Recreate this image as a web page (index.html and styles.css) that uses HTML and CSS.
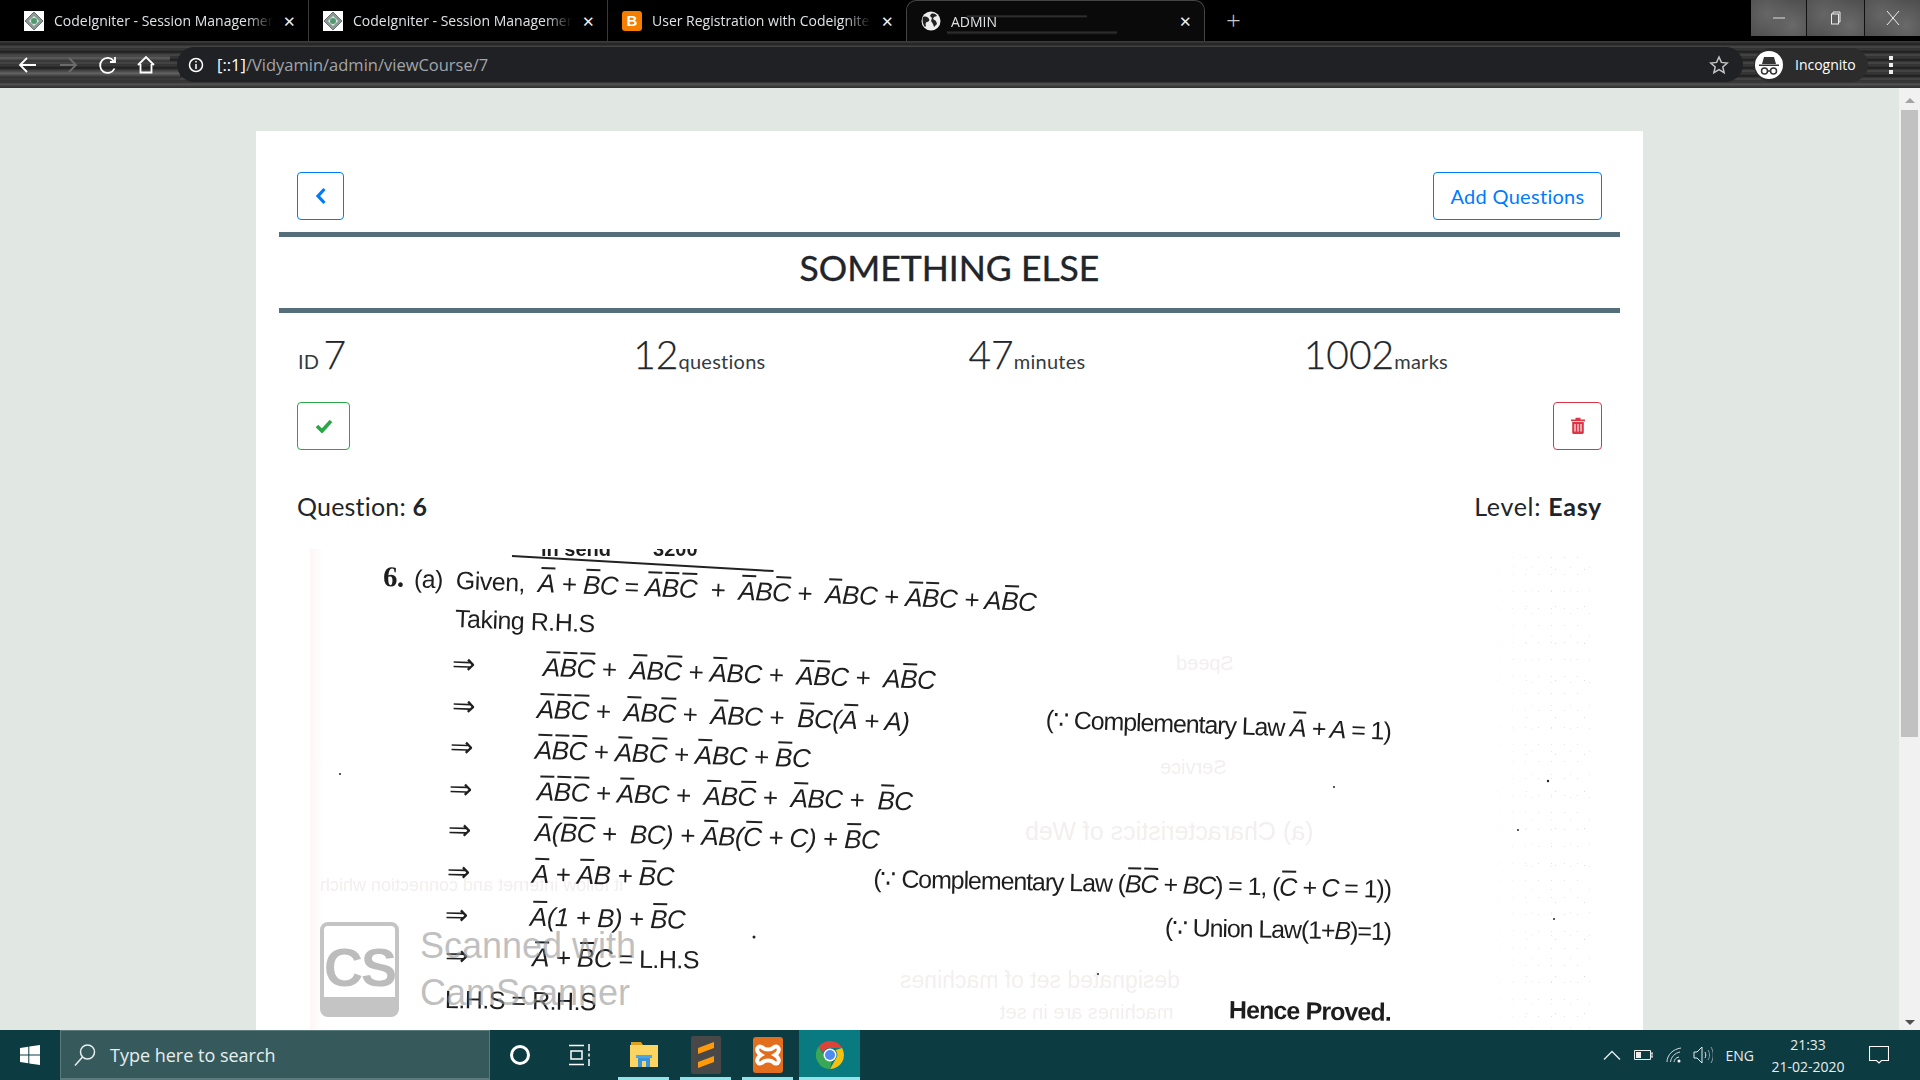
FILE: index.html
```html
<!DOCTYPE html>
<html lang="en">
<head>
  <meta charset="UTF-8" />
  <title>ADMIN</title>
  <link rel="stylesheet" href="styles.css">
</head>
<body>
<div class="screen">

  <div class="tabstrip">
    <div class="tab">
      <svg class="favicon" viewBox="0 0 20 20"><rect width="20" height="20" fill="#fff"/><path d="M10 1l9 9-9 9-9-9z" fill="#8a9a94" stroke="#555" stroke-width=".8"/><path d="M10 5l5 5-5 5-5-5z" fill="#dfe8e2"/><circle cx="10" cy="10" r="3" fill="#4f9a6e"/></svg>
      <span class="tab-title">CodeIgniter - Session Management</span>
      <span class="tab-close">✕</span>
    </div>
    <div class="tab">
      <svg class="favicon" viewBox="0 0 20 20"><rect width="20" height="20" fill="#fff"/><path d="M10 1l9 9-9 9-9-9z" fill="#8a9a94" stroke="#555" stroke-width=".8"/><path d="M10 5l5 5-5 5-5-5z" fill="#dfe8e2"/><circle cx="10" cy="10" r="3" fill="#4f9a6e"/></svg>
      <span class="tab-title">CodeIgniter - Session Management</span>
      <span class="tab-close">✕</span>
    </div>
    <div class="tab tab-last">
      <span class="favicon blogger">B</span>
      <span class="tab-title">User Registration with Codeigniter</span>
      <span class="tab-close">✕</span>
    </div>
    <div class="tab tab-active">
      <svg class="favicon" viewBox="0 0 20 20"><circle cx="10" cy="10" r="9.5" fill="#eee"/><path d="M2 6c3-1 5 0 6 2s-1 3-2 3-2 2-1 4l-1 1C2 14 1 9 2 6zM10 3c3-1 5 0 6 2l-3 1-1 2 3 2 1 3-3 3-1-3-2-3 1-3-2-2z" fill="#222"/></svg>
      <span class="tab-title">ADMIN</span>
      <span class="tab-close">✕</span>
    </div>
    <span class="new-tab">+</span>
    <div class="win-buttons">
      <span class="win-btn"><svg width="12" height="12" viewBox="0 0 12 12"><path d="M0 6h12" stroke="#ddd"/></svg></span>
      <span class="win-btn"><svg width="14" height="14" viewBox="0 0 14 14" fill="none" stroke="#eee"><path d="M4 3V1h7v10H9"/><rect x="2.500" y="3" width="7" height="10"/></svg></span>
      <span class="win-btn win-btn-close"><svg width="14" height="14" viewBox="0 0 14 14"><path d="M1 0l12 14M13 0L1 14" stroke="#eee"/></svg></span>
    </div>
  </div>

  <div class="toolbar">
    <svg class="tool" viewBox="0 0 20 20" fill="none" stroke="#fff" stroke-width="1.800"><path d="M18 10H3M9 3l-7 7 7 7"/></svg>
    <svg class="tool" viewBox="0 0 20 20" fill="none" stroke="#6b6b6b" stroke-width="1.800"><path d="M2 10h15M11 3l7 7-7 7"/></svg>
    <svg class="tool" viewBox="0 0 20 20" fill="none" stroke="#fff" stroke-width="1.800"><path d="M16.500 13.500a7.500 7.500 0 1 1-.8-7.500"/><path d="M17 2v5h-5"/></svg>
    <svg class="tool" viewBox="0 0 20 20" fill="none" stroke="#fff" stroke-width="1.800"><path d="M2 10l8-8 8 8M4.500 9v8.500h11V9"/></svg>
    <div class="omnibox">
      <svg class="info-icon" viewBox="0 0 16 16" fill="none" stroke="#fff" stroke-width="1.500"><circle cx="8" cy="8" r="6.500"/><path d="M8 7v5M8 4v1.500"/></svg>
      <span class="url"><span class="url-host">[::1]</span>/Vidyamin/admin/viewCourse/7</span>
      <svg class="star-icon" viewBox="0 0 20 20" fill="none" stroke="#c4c4c4" stroke-width="1.500"><path d="M10 2l2.400 5.400 5.800.6-4.400 3.900 1.300 5.700-5.100-3-5.100 3 1.300-5.700L1.800 8l5.800-.6z"/></svg>
    </div>
    <div class="profile">
      <svg class="profile-icon" viewBox="0 0 28 28"><circle cx="14" cy="14" r="14" fill="#fff"/><path d="M9 6h10l2 7H7zM4 13.500h20V15H4z" fill="#333"/><g fill="none" stroke="#333" stroke-width="1.500"><circle cx="9.500" cy="20" r="3"/><circle cx="18.500" cy="20" r="3"/><path d="M12.500 20h3"/></g></svg>
      <span>Incognito</span>
    </div>
    <span class="menu-dots"><i></i><i></i><i></i></span>
  </div>

  <div class="viewport">
    <main class="page">
      <section class="card">
        <div class="actions">
          <button class="btn btn-back"><svg width="12" height="18" viewBox="0 0 12 18"><path d="M9.500 2L3 9l6.500 7" fill="none" stroke="#007bff" stroke-width="3.200"/></svg></button>
          <button class="btn btn-add">Add Questions</button>
        </div>
        <h1 class="course-title">SOMETHING ELSE</h1>
        <div class="stats">
          <div class="stat"><small class="id-label">ID</small> <span class="num">7</span></div>
          <div class="stat"><span class="num">12</span><small>questions</small></div>
          <div class="stat"><span class="num">47</span><small>minutes</small></div>
          <div class="stat"><span class="num">1002</span><small>marks</small></div>
        </div>
        <div class="actions actions-status">
          <button class="btn btn-check"><svg width="18" height="15" viewBox="0 0 18 15"><path d="M2 8l5 5 9-10" fill="none" stroke="#28a745" stroke-width="3.600"/></svg></button>
          <button class="btn btn-trash"><svg width="14" height="17" viewBox="0 0 14 17" fill="#dc3545"><path d="M0 2.500h4.500V.8h5v1.700H14v1.800H0zM1.200 5h11.600v10.500c0 .8-.6 1.500-1.400 1.500H2.600c-.8 0-1.400-.7-1.400-1.500z"/><path d="M4 7v7.500M7 7v7.500M10 7v7.500" stroke="#fff" stroke-width="1.100"/></svg></button>
        </div>
        <div class="question-head">
          <span>Question: <b>6</b></span>
          <span class="level">Level: <b>Easy</b></span>
        </div>

        <div class="scan">
          <div class="ghost ghost-speed">Speed</div>
          <div class="ghost ghost-service">Service</div>
          <div class="ghost ghost-chars">(a) Characteristics of Web</div>
          <div class="ghost ghost-back1">it follow internet and connection which</div>
          <div class="ghost ghost-back2">designated set of machines</div>
          <div class="ghost ghost-back3">machines are in set</div>

          <div class="scan-top"><span>in send</span><span>3200</span></div>
          <div class="scan-rule"></div>

          <div class="scan-lines">
            <div class="line line-1"><b class="qno">6.</b><span class="qpart">(a)</span><span>Given,&nbsp; <i><u>A</u> + <u>B</u>C</i> = <i><u>A</u><u>B</u><u>C</u> &nbsp;+ &nbsp;<u>A</u>B<u>C</u> + &nbsp;<u>A</u>BC + <u>A</u><u>B</u>C + A<u>B</u>C</i></span></div>
            <div class="line line-2">Taking R.H.S</div>
            <div class="line line-3"><span class="arrow">⇒</span><i><u>A</u><u>B</u><u>C</u> + &nbsp;<u>A</u>B<u>C</u> + <u>A</u>BC + &nbsp;<u>A</u><u>B</u>C + &nbsp;A<u>B</u>C</i></div>
            <div class="line line-4"><span class="arrow">⇒</span><i><u>A</u><u>B</u><u>C</u> + &nbsp;<u>A</u>B<u>C</u> + &nbsp;<u>A</u>BC + &nbsp;<u>B</u>C(<u>A</u> + A)</i><span class="note">(∵ Complementary Law <i><u>A</u> + A</i> = 1)</span></div>
            <div class="line line-5"><span class="arrow">⇒</span><i><u>A</u><u>B</u><u>C</u> + <u>A</u>B<u>C</u> + <u>A</u>BC + <u>B</u>C</i></div>
            <div class="line line-6"><span class="arrow">⇒</span><i><u>A</u><u>B</u><u>C</u> + <u>A</u>BC + &nbsp;<u>A</u>B<u>C</u> + &nbsp;<u>A</u>BC + &nbsp;<u>B</u>C</i></div>
            <div class="line line-7"><span class="arrow">⇒</span><i><u>A</u>(<u>B</u><u>C</u> + &nbsp;BC) + <u>A</u>B(<u>C</u> + C) + <u>B</u>C</i></div>
            <div class="line line-8"><span class="arrow">⇒</span><i><u>A</u> + <u>A</u>B + <u>B</u>C</i><span class="note">(∵ Complementary Law (<i><u>B</u><u>C</u> + BC</i>) = 1, (<i><u>C</u> + C</i> = 1))</span></div>
            <div class="line line-9"><span class="arrow">⇒</span><i><u>A</u>(1 + B) + <u>B</u>C</i><span class="note">(∵ Union Law(1+<i>B</i>)=1)</span></div>
            <div class="line line-10"><span class="arrow">⇒</span><i><u>A</u> + <u>B</u>C</i> = L.H.S</div>
            <div class="line line-11">L.H.S = R.H.S<b class="note note-proved">Hence Proved.</b></div>
          </div>

          <svg class="specks" width="1280" height="490" viewBox="0 0 1280 490" fill="#222"><circle cx="444" cy="388" r="1.500"/><circle cx="1238" cy="232" r="1.200"/><circle cx="1244" cy="370" r="1"/><circle cx="1024" cy="238" r="1"/><circle cx="788" cy="425" r="1"/><circle cx="1208" cy="281" r="1"/><circle cx="30" cy="225" r="1"/></svg>

          <div class="watermark">
            <div class="cs-logo">CS</div>
            <div class="cs-text">Scanned with<br>CamScanner</div>
          </div>
        </div>
      </section>
    </main>
    <div class="scrollbar">
      <span class="sb-up"></span>
      <span class="sb-thumb"></span>
      <span class="sb-down"></span>
    </div>
  </div>

  <footer class="taskbar">
    <span class="start"><svg width="20" height="20" viewBox="0 0 20 20" fill="#fff"><path d="M0 3l8.300-1.200v7.800H0zM9.300 1.600L20 0v9.600H9.300zM0 10.600h8.300v7.700L0 17zM9.300 10.600H20V20L9.300 18.400z"/></svg></span>
    <div class="search">
      <svg width="24" height="24" viewBox="0 0 24 24" fill="none" stroke="#e6eeee" stroke-width="1.500"><circle cx="14.500" cy="9" r="7"/><path d="M9.500 14L2 22.500"/></svg>
      <span>Type here to search</span>
    </div>
    <span class="task-slot task-cortana"><i class="cortana"></i></span>
    <span class="task-slot task-view"><svg width="22" height="22" viewBox="0 0 22 22" fill="none" stroke="#fff" stroke-width="1.500"><path d="M0 1.500h15M0 20.500h15M2 7h11v8H2zM20 0v7M20 9.500v3M20 15v7"/></svg></span>
    <span class="task-app task-app-first"><svg width="30" height="30" viewBox="0 0 30 30"><path d="M2 2h10l2 3H2z" fill="#dca11f"/><path d="M1 5h28v22H1z" fill="#fcd462"/><path d="M9 27V15h12v12h-4v-6h-4v6z" fill="#3b93d8"/><path d="M7 15h16v3H7z" fill="#4ba6e8"/></svg></span>
    <span class="task-app"><svg width="30" height="38" viewBox="0 0 30 38"><rect width="30" height="38" rx="2" fill="#484848"/><path d="M23 6v6L7 18v-6z" fill="#ff9a0a"/><path d="M7 14l16 6v6L7 32v-6l16-6-16-6z" fill="#ff9a0a"/></svg></span>
    <span class="task-app"><svg width="30" height="36" viewBox="0 0 30 36"><rect width="30" height="36" rx="3" fill="#e36f1e"/><path d="M10 11c-5-5-9 3-2 7-7 4-3 12 2 7 2-2 8-2 10 0 5 5 9-3 2-7 7-4 3-12-2-7-2 2-8 2-10 0z" fill="none" stroke="#fff" stroke-width="4"/></svg></span>
    <span class="task-app task-app-active"><svg width="28" height="28" viewBox="0 0 28 28"><path d="M14 0a14 14 0 0 1 12.100 7H14a7 7 0 0 0-6.700 5L2.800 5.500A14 14 0 0 1 14 0z" fill="#db4437"/><path d="M26.100 7A14 14 0 0 1 14 28l6-10.500A7 7 0 0 0 19.500 9z" fill="#f4c20d"/><path d="M14 28A14 14 0 0 1 2.800 5.500L8.500 15.500a7 7 0 0 0 7.500 3.300z" fill="#3aa757"/><circle cx="14" cy="14" r="6.500" fill="#fff"/><circle cx="14" cy="14" r="5" fill="#4d8bf0"/></svg></span>

    <div class="tray">
      <svg width="18" height="10" viewBox="0 0 18 10" fill="none" stroke="#e8eeee" stroke-width="1.300"><path d="M1 9.500l8-8 8 8"/></svg>
      <svg width="19" height="10" viewBox="0 0 19 10"><path d="M.5.500h16v9H.5zM17 3h2v4h-2z" fill="none" stroke="#eee"/><path d="M2 2h5v6H2z" fill="#eee"/></svg>
      <svg width="16" height="16" viewBox="0 0 16 16" fill="none" stroke="#cfdada"><path d="M1 15C1 8 7 2 15 1M4.500 15C5 10 9 6 14 5M8 15c.3-2.500 2-4.500 5-5"/><circle cx="13" cy="14" r="1.500" fill="#fff" stroke="none"/></svg>
      <svg width="20" height="18" viewBox="0 0 20 18" fill="none" stroke="#e4ecec"><path d="M1 6h3l5-5v16l-5-5H1z"/><path d="M12 6c1 2 1 4 0 6" /><path d="M15 4c2 3 2 7 0 10M18 1c3 5 3 11 0 16" stroke="#8aa0a2"/></svg>
      <span class="lang">ENG</span>
      <div class="clock"><span>21:33</span><span>21-02-2020</span></div>
      <svg class="notify" width="20" height="18" viewBox="0 0 20 18" fill="none" stroke="#fff" stroke-width="1.100"><path d="M.5.500h19v14h-7l-2.500 2.500L7.500 14.500h-7z"/></svg>
    </div>
  </footer>
</div>
</body>
</html>
```

FILE: styles.css
```css
* {
  box-sizing: border-box;
}

html, body {
  margin: 0;
  height: 100%;
  overflow: hidden;
  background: #000;
}

.screen {
  display: flex;
  flex-direction: column;
  width: 1920px;
  height: 1080px;
}

/* browser tabs */
.tabstrip {
  display: flex;
  align-items: flex-start;
  height: 41px;
  padding-left: 10px;
  background: #000;
  font: 14px "Open Sans", sans-serif;
  color: #dfe3e6;
}

.tab {
  display: flex;
  align-items: center;
  gap: 10px;
  width: 299px;
  height: 41px;
  padding: 0 12px 0 14px;
  border-right: 1px solid #3a3a3a;
}

.tab-last {
  border-right: 0;
  width: 298px;
}

.tab-active {
  border: 1px solid #444;
  border-bottom: 0;
  border-radius: 10px 10px 0 0;
  background:
    linear-gradient(180deg, transparent 14px, #3a3a3a 15px, transparent 17px) 60px 0 / 120px 41px no-repeat,
    linear-gradient(180deg, transparent 30px, #333 31px, transparent 34px) 40px 0 / 170px 41px no-repeat,
    #0a0a0a;
}

.favicon {
  flex: none;
  width: 20px;
  height: 20px;
}

.blogger {
  display: block;
  border-radius: 3px;
  background: #f57d00;
  color: #fff;
  font: bold 15px/20px "Liberation Sans", sans-serif;
  text-align: center;
}

.tab-title {
  flex: 1;
  overflow: hidden;
  white-space: nowrap;
  -webkit-mask-image: linear-gradient(90deg, #000 88%, transparent 100%);
  mask-image: linear-gradient(90deg, #000 88%, transparent 100%);
}

.tab-close {
  font-size: 15px;
  color: #eee;
}

.new-tab {
  margin-left: 21px;
  font-size: 26px;
  line-height: 40px;
  font-weight: 300;
  color: #c8c8c8;
}

.win-buttons {
  display: flex;
  margin-left: auto;
  height: 36px;
}

.win-btn {
  display: flex;
  align-items: center;
  justify-content: center;
  width: 58px;
  border-left: 1px solid #111;
  background:
    radial-gradient(circle at 30% 40%, #666, transparent 60%),
    radial-gradient(circle at 75% 70%, #6a6a6a, transparent 55%),
    #4f4f4f;
}

.win-btn:first-child {
  width: 55px;
  border-left: 0;
}

.win-btn-close {
  width: 56px;
}

/* address bar */
.toolbar {
  display: flex;
  align-items: center;
  height: 47px;
  padding: 0 0 0 18px;
  background:
    linear-gradient(180deg, #3a3a3a 0, transparent 3px) 0 0 / 100% 47px no-repeat,
    linear-gradient(180deg, transparent 14px, #5e5e5e 17px, transparent 21px) 0 0 / 170px 47px no-repeat,
    linear-gradient(180deg, transparent 30px, #666 32px, #333 36px, transparent 42px) 0 0 / 180px 47px no-repeat,
    linear-gradient(180deg, transparent 41px, #555 43px, #333 46px) 0 0 / 100% 47px no-repeat,
    repeating-linear-gradient(180deg, #3c3c3c 0, #1e1e1e 3px, #4a4a4a 6px, #2c2c2c 8px);
}

.tool {
  flex: none;
  width: 20px;
  height: 20px;
  margin-right: 20px;
}

.tool:nth-child(3) {
  margin-right: 18px;
}

.tool:nth-child(4) {
  margin-right: 0;
}

.omnibox {
  display: flex;
  align-items: center;
  flex: none;
  width: 1566px;
  height: 35px;
  margin-left: 21px;
  padding: 0 14px 0 11px;
  border-radius: 18px;
  background: #202124;
  font: 16.500px "Open Sans", sans-serif;
  color: #a2a6aa;
}

.info-icon {
  width: 16px;
  height: 16px;
  margin-right: 13px;
}

.url-host {
  color: #fff;
}

.star-icon {
  width: 20px;
  height: 20px;
  margin-left: auto;
}

.profile {
  display: flex;
  align-items: center;
  gap: 12px;
  width: 114px;
  height: 34px;
  margin-left: 11px;
  padding-left: 1px;
  border-radius: 17px;
  background: #2c2c2c;
  font: 14px "Open Sans", sans-serif;
  color: #fff;
}

.profile-icon {
  width: 28px;
  height: 28px;
}

.menu-dots {
  display: flex;
  flex-direction: column;
  gap: 3px;
  margin-left: 21px;
}

.menu-dots i {
  width: 4px;
  height: 4px;
  background: #eee;
}

/* page */
.viewport {
  display: flex;
  flex: 1;
  min-height: 0;
}

.page {
  flex: 1;
  min-width: 0;
  padding: 43px 256px 0;
  background: #e1e7e3;
}

.card {
  display: flex;
  flex-direction: column;
  height: 100%;
  padding: 41px 23px 0;
  background: #fff;
  overflow: hidden;
  font-family: "Lato", sans-serif;
  color: #212529;
}

.actions {
  display: flex;
  justify-content: space-between;
  flex: none;
  padding: 0 18px;
}

.btn {
  display: flex;
  align-items: center;
  justify-content: center;
  height: 48px;
  padding-bottom: 2px;
  border: 1px solid #007bff;
  border-radius: 4px;
  background: #fff;
  font: 20px "Lato", sans-serif;
  letter-spacing: .3px;
  color: #007bff;
}

.btn-back {
  width: 47px;
}

.btn-add {
  width: 169px;
}

.btn-check {
  width: 53px;
  border-color: #28a745;
}

.btn-trash {
  width: 49px;
  border-color: #dc3545;
}

.course-title {
  flex: none;
  height: 81px;
  margin: 12px 0 0;
  border-top: 5px solid #546e7a;
  border-bottom: 5px solid #546e7a;
  font-size: 35.500px;
  font-weight: 400;
  line-height: 62px;
  text-align: center;
  -webkit-text-stroke: .4px #212529;
}

.stats {
  display: grid;
  grid-template-columns: repeat(4, 1fr);
  flex: none;
  height: 89px;
  padding-top: 19px;
}

.stat {
  padding-left: 19px;
  white-space: nowrap;
}

.num {
  font-size: 39px;
  font-weight: 300;
  line-height: 44px;
  -webkit-text-stroke: .25px #212529;
}

.stat small {
  font-size: 20px;
  font-weight: 400;
  letter-spacing: .25px;
  color: #343a40;
}

.question-head {
  display: flex;
  justify-content: space-between;
  flex: none;
  padding: 40px 18px 0;
  font-size: 25px;
  letter-spacing: .2px;
  line-height: 32px;
}

.level {
  letter-spacing: .7px;
}

/* scanned answer sheet */
.scan {
  position: relative;
  flex: 1;
  min-height: 0;
  margin: 27px 30px 0 31px;
  overflow: hidden;
  background: linear-gradient(90deg, #fdf7f5, #fff 14px);
  font: 25px "Liberation Sans", sans-serif;
  color: #1e1e1e;
}

.scan::after {
  content: "";
  position: absolute;
  top: 0;
  right: 0;
  bottom: 0;
  width: 110px;
  background:
    radial-gradient(circle, #dcdcdc .6px, transparent 1px) 0 0 / 13px 17px,
    radial-gradient(circle, #e6e6e6 .7px, transparent 1px) 5px 7px / 19px 23px,
    radial-gradient(circle, #d2d2d2 .5px, transparent 1px) 3px 2px / 29px 37px;
  -webkit-mask-image: linear-gradient(90deg, transparent, #000 60%);
  mask-image: linear-gradient(90deg, transparent, #000 60%);
  opacity: .8;
}

.scan-top {
  display: flex;
  gap: 42px;
  height: 8px;
  margin-left: 231px;
  font-size: 20px;
  line-height: 0;
  font-weight: bold;
  filter: blur(.4px);
}

.scan-rule {
  width: 262px;
  height: 2px;
  margin: -2px 0 -1px 202px;
  background: #222;
  transform: rotate(3.300deg);
  transform-origin: left center;
}

.scan-lines {
  position: relative;
  width: 1081px;
  filter: blur(.35px);
}

.scan-lines u {
  display: inline-block;
  padding-top: 6px;
  background: linear-gradient(#222, #222) 3px 1px / 86% 2px no-repeat;
  line-height: 23px;
  text-decoration: none;
}

.line {
  display: flex;
  align-items: baseline;
  height: 41.500px;
  line-height: 41.500px;
  letter-spacing: -.5px;
  white-space: pre;
  transform-origin: left center;
}

.line > i {
  display: block;
  font-size: 26px;
}

.line > span > i {
  font-size: 26px;
}

.arrow {
  flex: none;
  font-family: "DejaVu Sans", sans-serif;
  font-size: 28px;
  letter-spacing: 0;
}

.note {
  margin-left: auto;
  letter-spacing: -1.100px;
}

.note i,
.line > span.note > i {
  font-size: 25px;
  font-style: italic;
}

.note-proved {
  letter-spacing: -.9px;
}

.qno {
  width: 31px;
  font-family: "Liberation Serif", serif;
  font-size: 29px;
}

.qpart {
  width: 42px;
}

.line-1 { height: 42px; margin-left: 73px; transform: rotate(2.200deg); }
.line-2 { height: 45px; margin-left: 145px; transform: rotate(2.200deg); }
.line-3 { margin-left: 142px; transform: rotate(1.900deg); }
.line-3 .arrow { width: 91px; }
.line-4 { margin-left: 142px; transform: rotate(2deg); }
.line-4 .arrow { width: 85px; }
.line-4 .note { transform: translateY(-8px); }
.line-5 { margin-left: 140px; transform: rotate(1.800deg); }
.line-5 .arrow { width: 85px; }
.line-6 { margin-left: 139px; transform: rotate(1.500deg); }
.line-6 .arrow { width: 88px; }
.line-7 { margin-left: 138px; transform: rotate(1.300deg); }
.line-7 .arrow { width: 87px; }
.line-8 { height: 43px; margin-left: 137px; transform: rotate(1.200deg); }
.line-8 .arrow { width: 85px; }
.line-8 .note { transform: translateY(-3px); }
.line-9 { margin-left: 135px; transform: rotate(1.100deg); }
.line-9 .arrow { width: 85px; }
.line-9 .note { transform: translateY(-2px); }
.line-10 { height: 44px; margin-left: 135px; transform: rotate(.8deg); }
.line-10 .arrow { width: 87px; }
.line-11 { margin-left: 135px; transform: rotate(.9deg); }
.line-11 .note { transform: translateY(-2px); }

.ghost {
  position: absolute;
  font-size: 20px;
  white-space: nowrap;
  color: #f3efee;
  filter: blur(.6px);
  transform: scaleX(-1);
}

.ghost-speed { top: 103px; left: 866px; }
.ghost-service { top: 207px; left: 850px; }
.ghost-chars { top: 268px; left: 715px; font-size: 25px; }
.ghost-back1 { top: 326px; left: 10px; font-size: 18px; }
.ghost-back2 { top: 418px; left: 590px; font-size: 23px; }
.ghost-back3 { top: 452px; left: 690px; }

.specks {
  position: absolute;
  top: 0;
  left: 0;
}

.watermark {
  position: absolute;
  top: 373px;
  left: 10px;
  display: flex;
  gap: 21px;
  color: rgba(150, 150, 150, .6);
}

.cs-logo {
  width: 79px;
  height: 95px;
  padding-top: 14px;
  border: 4px solid #c4c4c4;
  border-bottom: 20px solid #c4c4c4;
  border-radius: 8px;
  font: bold 54px/1 "Liberation Sans", sans-serif;
  letter-spacing: -2px;
  text-align: center;
  color: #bcbcbc;
}

.cs-text {
  font: 36px/47px "Liberation Sans", sans-serif;
}

.scrollbar {
  display: flex;
  flex-direction: column;
  align-items: center;
  flex: none;
  width: 21px;
  background: #f1f1f1;
}

.sb-up {
  flex: none;
  margin-top: 10px;
  border: 5px solid transparent;
  border-top: 0;
  border-bottom: 5px solid #a3a3a3;
}

.sb-thumb {
  flex: none;
  width: 17px;
  height: 627px;
  margin-top: 7px;
  background: #c1c1c1;
}

.sb-down {
  flex: none;
  margin-top: auto;
  margin-bottom: 5px;
  border: 5px solid transparent;
  border-bottom: 0;
  border-top: 5px solid #505050;
}

/* windows taskbar */
.taskbar {
  display: flex;
  align-items: center;
  flex: none;
  height: 50px;
  background: #0d3b42;
  font: 18px "Open Sans", sans-serif;
  color: #e6eeee;
}

.start {
  display: flex;
  justify-content: center;
  flex: none;
  width: 60px;
}

.search {
  display: flex;
  align-items: center;
  gap: 13px;
  width: 430px;
  height: 50px;
  padding-left: 12px;
  border: 1px solid #5a7a7b;
  border-bottom-width: 2px;
  background: #365a5c;
}

.task-slot {
  display: flex;
  align-items: center;
  justify-content: center;
  flex: none;
  width: 49px;
}

.task-cortana {
  width: 60px;
}

.task-view {
  margin-left: 5px;
}

.cortana {
  width: 20px;
  height: 20px;
  border: 3px solid #fff;
  border-radius: 50%;
}

.task-app {
  display: flex;
  align-items: center;
  justify-content: center;
  flex: none;
  width: 51px;
  height: 50px;
  margin-right: 11px;
  box-shadow: inset 0 -3px #93e4ea;
}

.task-app-first {
  margin-left: 14px;
}

.task-app-active {
  width: 61px;
  margin-left: -5px;
  background: #087a80;
}

.tray {
  display: flex;
  align-items: center;
  margin-left: auto;
  padding-right: 31px;
}

.tray svg:nth-child(2) {
  margin-left: 13px;
}

.tray svg:nth-child(3) {
  margin-left: 13px;
}

.tray svg:nth-child(4) {
  margin-left: 11px;
}

.lang {
  margin-left: 13px;
  font-size: 14px;
}

.clock {
  display: flex;
  flex-direction: column;
  align-items: center;
  gap: 3px;
  width: 76px;
  margin-left: 16px;
  font-size: 14px;
  line-height: 19px;
}

.notify {
  margin-left: 23px;
}
```
